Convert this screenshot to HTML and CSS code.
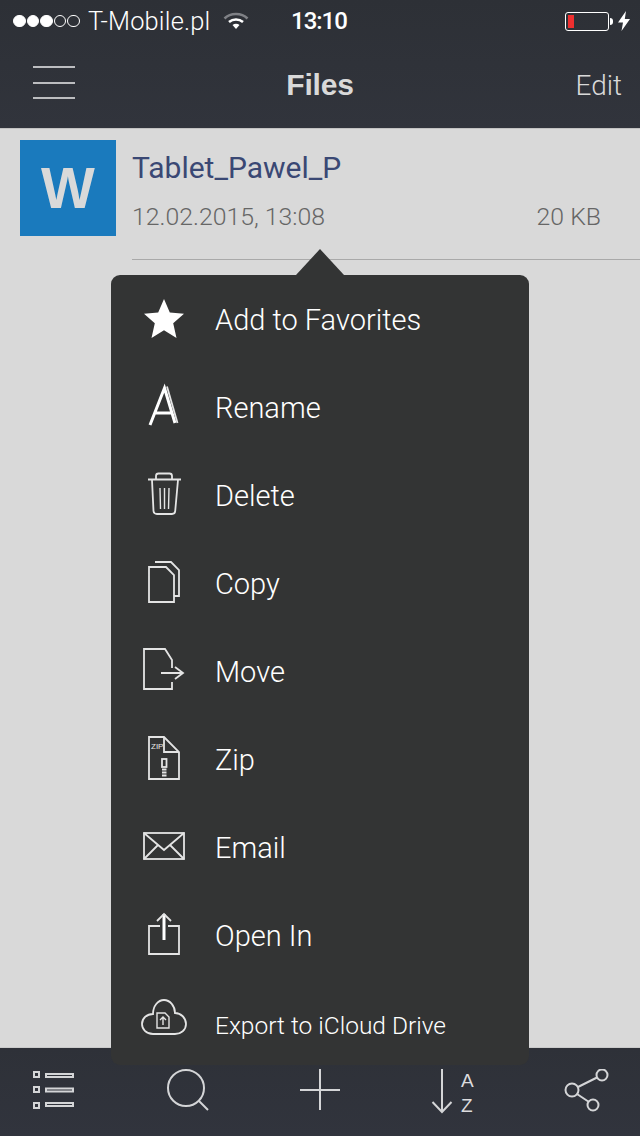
FILE: index.html
```html
<!DOCTYPE html>
<html lang="en">
<head>
<meta charset="utf-8">
<title>Files</title>
<link rel="stylesheet" href="styles.css">
</head>
<body>
<div class="app">
  <header class="top">
    <div class="status">
      <div class="dots"><i class="dot on"></i><i class="dot on"></i><i class="dot on"></i><i class="dot"></i><i class="dot"></i></div>
      <span class="carrier">T-Mobile.pl</span>
      <svg class="wifi" width="26" height="20" viewBox="0 0 26 20"><path class="wifi-far" d="M1.500 7.500C7.500 1.500 18.500 1.500 24.500 7.500"/><path class="wifi-near" d="M6 11C10 7.500 16 7.500 20 11"/><path class="wifi-fill" d="M9.500 14C11.500 12.300 14.500 12.300 16.500 14L13 18Z"/></svg>
      <span class="time">13:10</span>
      <div class="battery"><div class="battery-body"><div class="battery-level"></div></div><i class="battery-nub"></i>
        <svg class="bolt" width="12" height="20" viewBox="0 0 12 20"><path d="M8 0L0 11.500H5L3.500 20L12 8H6.800Z"/></svg>
      </div>
    </div>
    <nav class="nav">
      <div class="menu"><i></i><i></i><i></i></div>
      <h1 class="title">Files</h1>
      <span class="edit">Edit</span>
    </nav>
  </header>

  <main class="list">
    <div class="file">
      <div class="doc-icon">W</div>
      <div class="file-info">
        <div class="file-name">Tablet_Pawel_P</div>
        <div class="file-meta"><span>12.02.2015, 13:08</span><span>20 KB</span></div>
      </div>
    </div>
  </main>

  <footer class="bottom">
    <svg class="tool" width="60" height="60" viewBox="0 0 60 60"><g class="stroke2"><rect x="10" y="3" width="5" height="5"/><rect x="10" y="18" width="5" height="5"/><rect x="10" y="34" width="5" height="5"/><rect x="22" y="5" width="27" height="3"/><rect x="22" y="19.500" width="27" height="3"/><rect x="22" y="34" width="27" height="3"/></g></svg>
    <svg class="tool" width="60" height="60" viewBox="0 0 60 60"><g class="stroke2"><circle cx="29" cy="19" r="18"/><path d="M42 32L51 41"/></g></svg>
    <svg class="tool" width="60" height="60" viewBox="0 0 60 60"><g class="stroke2"><path d="M10 21H50M30 0V41"/></g></svg>
    <div class="sort">
      <svg width="22" height="46" viewBox="0 0 22 46"><g class="stroke2"><path d="M11 1V44M1.500 34L11 44L20.500 34"/></g></svg>
      <div class="az"><span>A</span><span>Z</span></div>
    </div>
    <svg class="tool" width="60" height="60" viewBox="0 0 60 60"><g class="stroke2"><circle cx="16" cy="21" r="6.500"/><circle cx="46" cy="6" r="5.500"/><circle cx="37" cy="36" r="5.500"/><path d="M22 18L41 8.500M21 25L33 33"/></g></svg>
  </footer>

  <div class="popup">
    <div class="row">
      <svg class="ico" width="60" height="60" viewBox="0 0 60 60"><path class="solid" d="M30 10L35.800 23.500L50 24.800L39.200 34.300L42.500 49L30 41.300L17.500 49L20.800 34.300L10 24.800L24.200 23.500Z"/></svg>
      <span>Add to Favorites</span>
    </div>
    <div class="row">
      <svg class="ico" width="60" height="60" viewBox="0 0 60 60"><g class="line"><path class="thick" d="M16 48L30.500 11L41 46M21 36H38"/><path d="M33 9.500L43.500 46"/></g></svg>
      <span>Rename</span>
    </div>
    <div class="row">
      <svg class="ico" width="60" height="60" viewBox="0 0 60 60"><g class="line"><path d="M14 14.500H47M22 14V11Q22 8.500 24.500 8.500H35.500Q38 8.500 38 11V14M18 15L19.500 46Q19.800 49 23 49H38Q41 49 41.200 46L44 15"/><path class="thin" d="M26 23L26.500 44M30.500 23V44M35 23L34.500 44"/></g></svg>
      <span>Delete</span>
    </div>
    <div class="row">
      <svg class="ico" width="60" height="60" viewBox="0 0 60 60"><g class="line"><path d="M15 14H32L40 22V49H15Z"/><path d="M21 9H37L45 17V43H40"/></g></svg>
      <span>Copy</span>
    </div>
    <div class="row">
      <svg class="ico" width="60" height="60" viewBox="0 0 60 60"><g class="line"><path d="M38 27V19L31 8H10V48H38V41"/><path d="M27 32H49M41 26L49 32L41 38"/></g></svg>
      <span>Move</span>
    </div>
    <div class="row">
      <svg class="ico" width="60" height="60" viewBox="0 0 60 60"><g class="line"><path d="M15 8H30L45 23V50H15Z"/><path d="M30 8V23H45"/><rect x="28" y="30" width="4.500" height="8"/><path d="M28 40.500H32.500M28 43.500H32.500M28 46.500H32.500"/></g><text class="zip-text" x="17" y="20">ZIP</text></svg>
      <span>Zip</span>
    </div>
    <div class="row">
      <svg class="ico" width="60" height="60" viewBox="0 0 60 60"><g class="line"><rect x="10" y="16" width="40" height="26"/><path d="M10 16L30 33L50 16M10 42L24 28M50 42L36 28"/></g></svg>
      <span>Email</span>
    </div>
    <div class="row">
      <svg class="ico" width="60" height="60" viewBox="0 0 60 60"><g class="line"><path d="M26 21H15V49H45V21H34"/><path class="thick" d="M30 9V35"/><path d="M23 16L30 9L37 16"/></g></svg>
      <span>Open In</span>
    </div>
    <div class="row row-last">
      <svg class="ico" width="60" height="60" viewBox="0 0 60 60"><g class="line"><path d="M19 40C12 40 8 35 8 30C8 24 13 20 19 20C19 12 24 6 30 6C36 6 41 12 41 19C47 19 52 24 52 30C52 36 47 40 41 40Z"/><path class="thin" d="M23 34V19H31L35 23V34Z"/><path class="thin" d="M29 31V23M26 26L29 23L32 26"/></g></svg>
      <span>Export to iCloud Drive</span>
    </div>
  </div>
</div>
</body>
</html>
```
FILE: styles.css
```css
* { box-sizing: border-box; }
html, body { margin: 0; padding: 0; }
body { font-family: "Liberation Sans", Arial, sans-serif; background: #d9d9d9; }
.app { position: relative; width: 640px; height: 1136px; overflow: hidden; display: flex; flex-direction: column; background: #d9d9d9; }

.top { height: 129px; flex: none; background: linear-gradient(#2d3036, #31343c); border-bottom: 1px solid #c2c2c2; display: flex; flex-direction: column; }
.status { height: 40px; flex: none; display: flex; align-items: center; padding: 2px 10px 0 13px; color: #fff; }
.dots { display: flex; gap: 1px; width: 68px; }
.dot { width: 12.600px; height: 12.600px; border-radius: 50%; border: 1px solid #fff; display: block; }
.dot.on { background: #fff; }
.carrier { font-family: Roboto, "Liberation Sans", sans-serif; font-weight: 300; font-size: 25.400px; letter-spacing: 0.200px; margin-left: 7px; width: 122px; white-space: nowrap; }
.wifi { margin-left: 13px; }
.wifi-far { fill: none; stroke: #7f8186; stroke-width: 2.500; }
.wifi-near { fill: none; stroke: #fff; stroke-width: 2.500; }
.wifi-fill { fill: #fff; }
.time { font-family: Roboto, "Liberation Sans", sans-serif; font-size: 24px; font-weight: 500; margin-left: 42px; width: 56px; letter-spacing: -1px; color: #fff; }
.battery { margin-left: auto; display: flex; align-items: center; }
.battery-body { width: 44px; height: 19px; border: 1px solid #fff; border-radius: 3px; padding: 2px; }
.battery-level { width: 6px; height: 100%; background: #ee2f2f; }
.battery-nub { display: block; width: 3px; height: 7px; margin-left: 1px; background: #fff; border-radius: 0 3px 3px 0; }
.bolt { margin-left: 5px; fill: #fff; }

.nav { flex: 1; display: grid; grid-template-columns: 1fr auto 1fr; align-items: center; padding: 0 18px 3px; color: #d9d9d9; }
.menu { width: 42px; height: 33px; margin-left: 15px; display: flex; flex-direction: column; justify-content: space-between; }
.menu i { display: block; height: 2px; background: #bcbdc0; }
.title { margin: 0; padding-top: 5px; font-size: 30px; font-weight: 700; letter-spacing: -0.200px; }
.edit { justify-self: end; padding-top: 6px; font-family: Roboto, "Liberation Sans", sans-serif; font-weight: 300; font-size: 28px; }

.list { flex: 1; min-height: 0; }
.file { display: flex; gap: 16px; padding: 11px 0 0 20px; }
.doc-icon { width: 96px; height: 96px; flex: none; background: #1a7abd; color: #d9d9d9; font-size: 57px; font-weight: 700; display: flex; align-items: center; justify-content: center; }
.file-info { flex: 1; height: 120px; border-bottom: 1px solid #a9a9a9; padding-right: 39px; font-family: Roboto, "Liberation Sans", sans-serif; font-weight: 300; }
.file-name { font-size: 30px; font-weight: 400; color: #3a4874; line-height: 34px; margin-top: 11px; }
.file-meta { display: flex; justify-content: space-between; font-size: 24.800px; line-height: 28px; margin-top: 18px; color: #666; }

.bottom { height: 89px; flex: none; background: linear-gradient(#2e3138, #31343d); border-top: 1px solid #cacaca; display: flex; justify-content: space-between; padding: 21px 24px 0; }
.tool { flex: none; display: block; }
.stroke2 { fill: none; stroke: #d4d5d7; stroke-width: 2; }
.sort { width: 60px; height: 60px; flex: none; display: flex; align-items: flex-start; gap: 8px; padding-left: 8px; color: #dcdcde; margin-top: -1px; }
.az { display: flex; flex-direction: column; font-size: 19px; line-height: 25px; }

.popup { position: absolute; top: 275px; left: 111px; width: 418px; height: 790px; background: #333434; border-radius: 9px; color: #fff; display: flex; flex-direction: column; font-family: Roboto, "Liberation Sans", sans-serif; font-weight: 300; }
.popup::before { content: ""; position: absolute; top: -26px; left: 185px; border-left: 24px solid transparent; border-right: 24px solid transparent; border-bottom: 26px solid #333434; }
.row { height: 88px; flex: none; display: flex; align-items: center; padding-left: 23px; gap: 21px; font-size: 29px; }
.row span { padding-top: 2px; }
.row-last { height: 86px; padding-top: 4px; font-size: 24.500px; }
.ico { flex: none; display: block; }
.solid { fill: #fff; }
.line { fill: none; stroke: #e4e4e4; stroke-width: 1.800; }
.thick { stroke-width: 3; stroke: #fff; }
.thin { stroke-width: 1.400; }
.zip-text { font-size: 8px; fill: #e8e8e8; font-family: "Liberation Sans", Arial, sans-serif; }
```
